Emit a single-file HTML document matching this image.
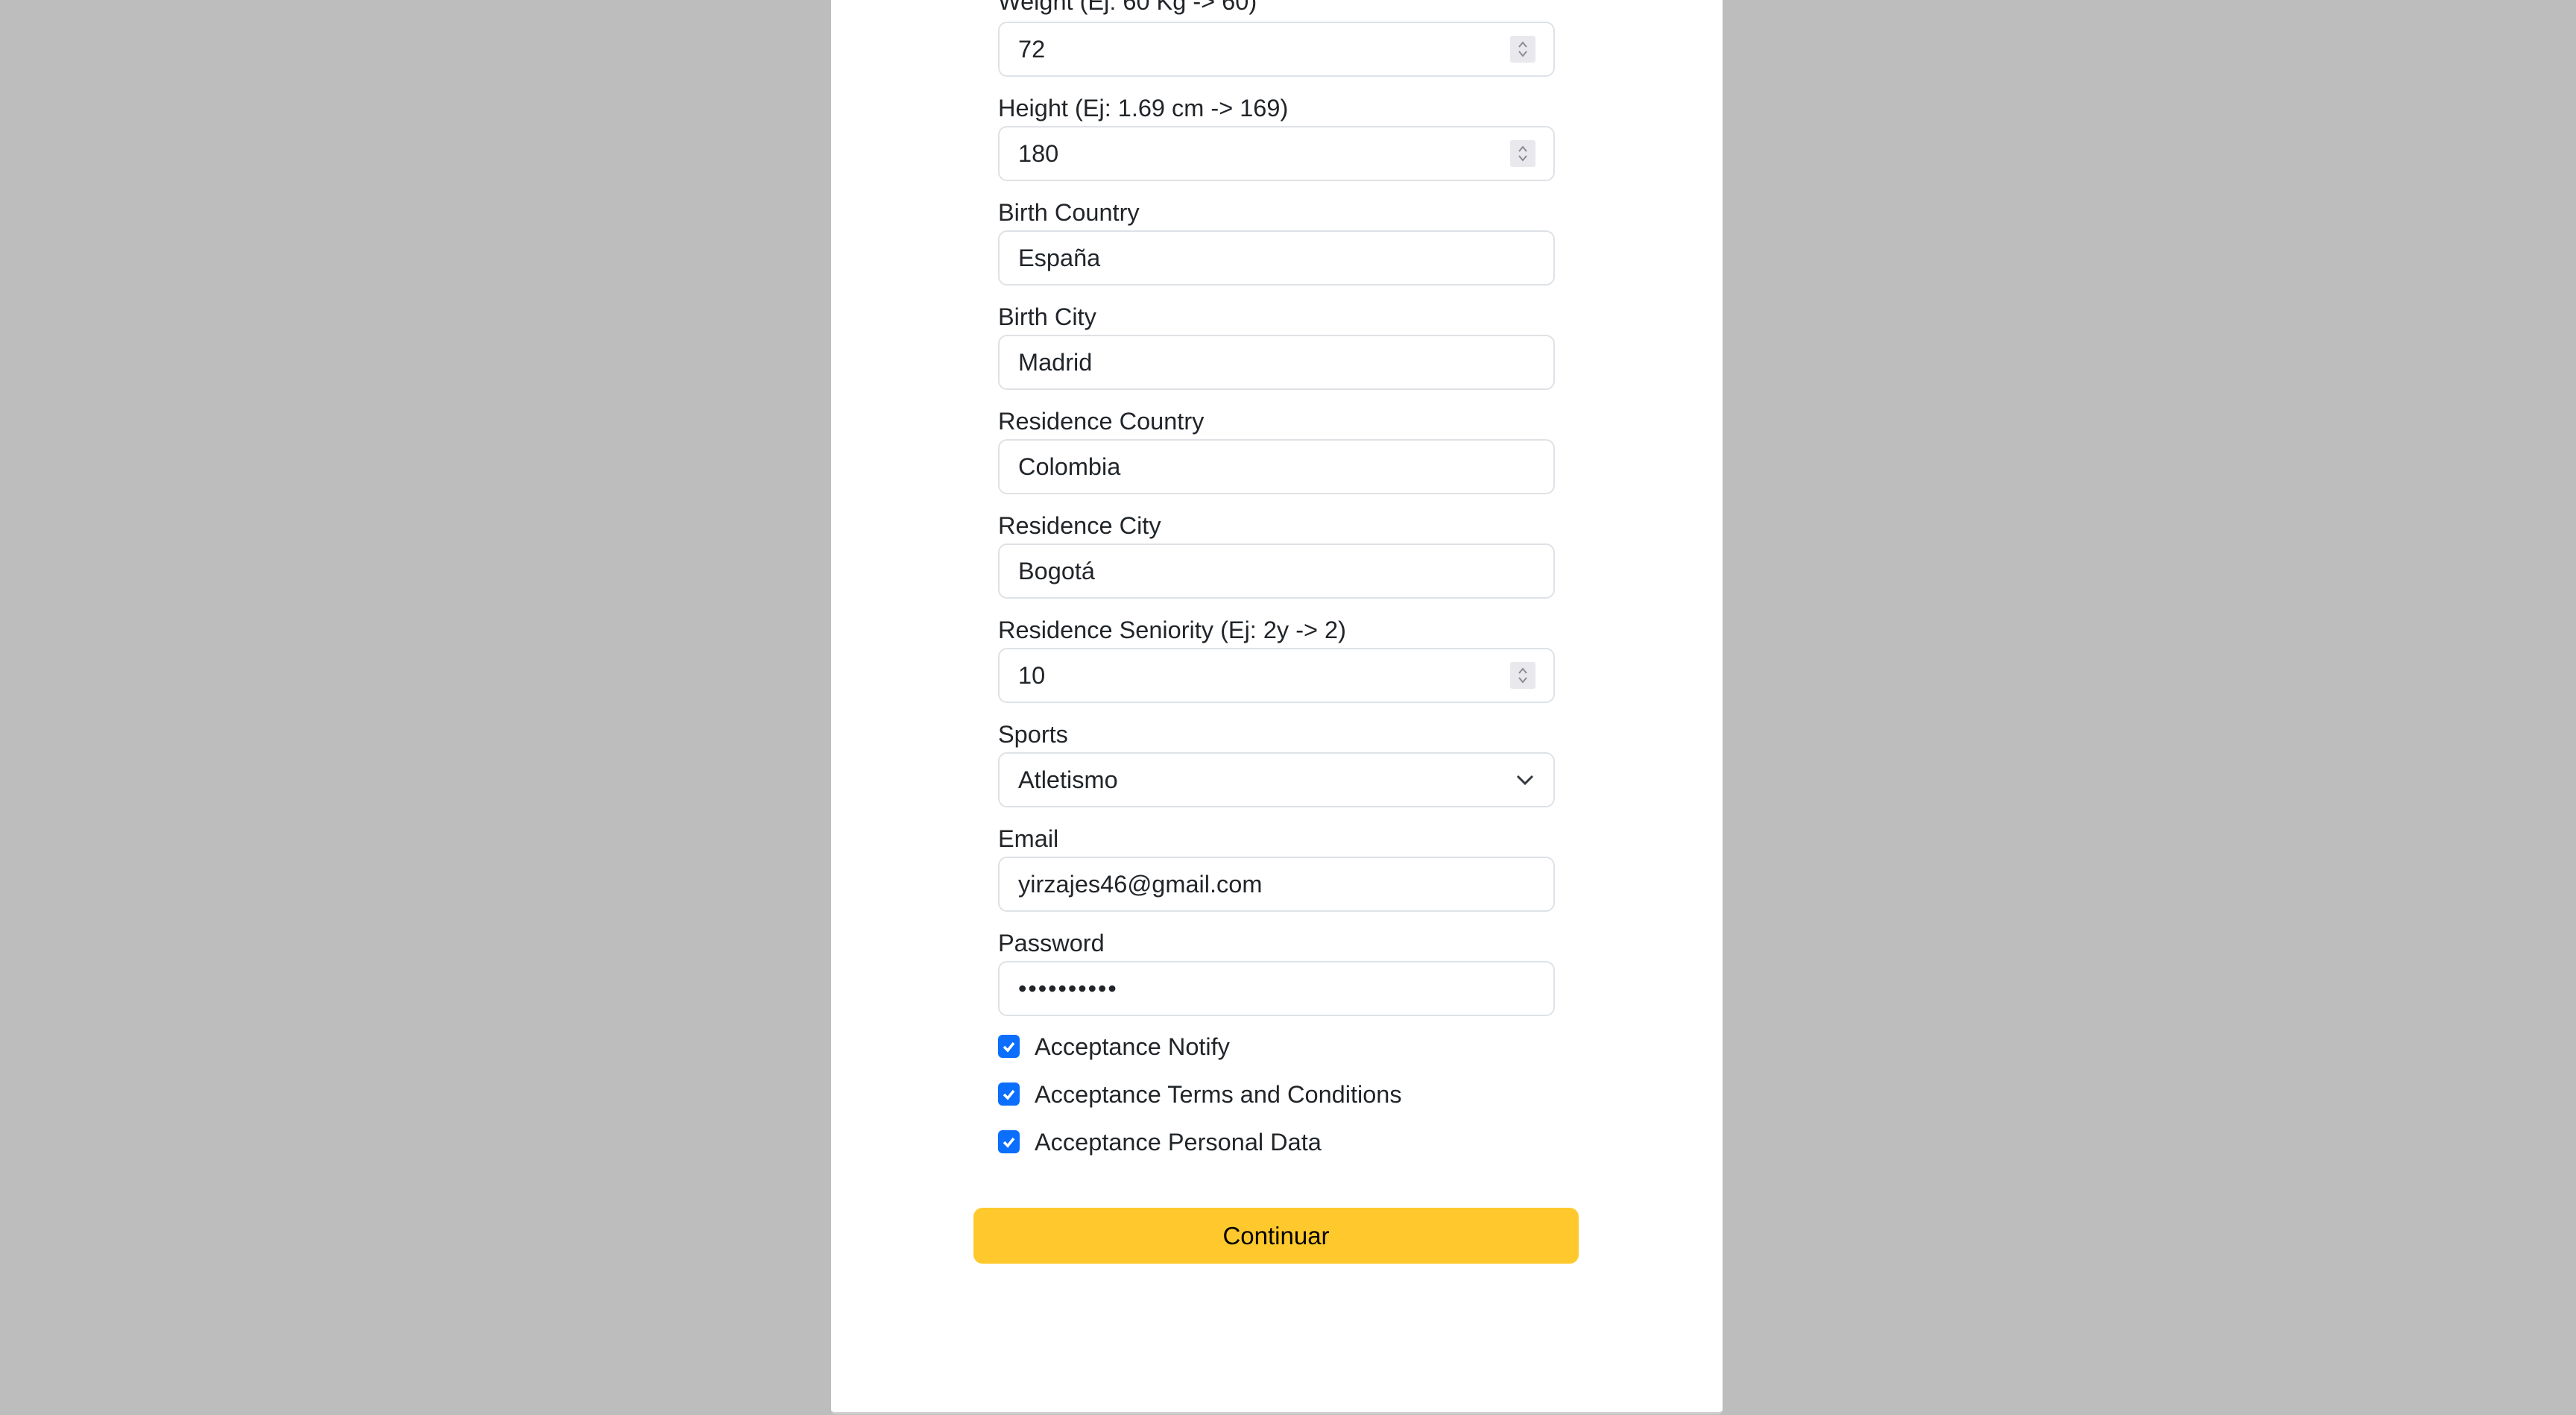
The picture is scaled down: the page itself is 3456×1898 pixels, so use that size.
<!DOCTYPE html>
<html><head><meta charset="utf-8"><style>
html,body{margin:0;padding:0;}
body{width:3456px;height:1898px;background:#bdbdbd;position:relative;overflow:hidden;font-family:"Liberation Sans",Arial,sans-serif;color:#212529;}
.card{position:absolute;left:1115px;top:-10px;width:1196px;height:1904px;background:#fff;border-bottom:3px solid #d0d0d0;border-radius:0 0 6px 6px;}
.lbl{position:absolute;left:1339px;font-size:32.5px;line-height:36px;}
.inp{position:absolute;left:1339px;width:743px;height:70px;border:2px solid #dee2e6;border-radius:12px;background:#fff;}
.inp span.v{position:absolute;left:25px;top:0;line-height:70px;font-size:32.5px;}
.spin{position:absolute;left:685px;top:17px;width:34px;height:36px;background:#e9e9ed;border-radius:3px;}
.chk{position:absolute;left:1339px;width:29px;height:31px;background:#0b6efd;border-radius:6px;}
.ct{position:absolute;left:1388px;font-size:32.5px;line-height:36px;}
.btn{position:absolute;left:1306px;top:1620px;width:812px;height:75px;background:#ffc92d;border-radius:12px;text-align:center;line-height:75px;font-size:33px;color:#000;}
</style></head><body>
<div class="card"></div>

<div class="lbl" style="top:-16px">Weight (Ej: 60 Kg -&gt; 60)</div>
<div class="inp" style="top:29px"><span class="v">72</span><div class="spin"><svg width="34" height="36" viewBox="0 0 34 36"><path d="M12 15l5-6 5 6M12 21l5 6 5-6" fill="none" stroke="#8a8a95" stroke-width="2"/></svg></div></div>

<div class="lbl" style="top:127px">Height (Ej: 1.69 cm -&gt; 169)</div>
<div class="inp" style="top:169px"><span class="v">180</span><div class="spin"><svg width="34" height="36" viewBox="0 0 34 36"><path d="M12 15l5-6 5 6M12 21l5 6 5-6" fill="none" stroke="#8a8a95" stroke-width="2"/></svg></div></div>

<div class="lbl" style="top:267px">Birth Country</div>
<div class="inp" style="top:309px"><span class="v">España</span></div>

<div class="lbl" style="top:407px">Birth City</div>
<div class="inp" style="top:449px"><span class="v">Madrid</span></div>

<div class="lbl" style="top:547px">Residence Country</div>
<div class="inp" style="top:589px"><span class="v">Colombia</span></div>

<div class="lbl" style="top:687px">Residence City</div>
<div class="inp" style="top:729px"><span class="v">Bogotá</span></div>

<div class="lbl" style="top:827px">Residence Seniority (Ej: 2y -&gt; 2)</div>
<div class="inp" style="top:869px"><span class="v">10</span><div class="spin"><svg width="34" height="36" viewBox="0 0 34 36"><path d="M12 15l5-6 5 6M12 21l5 6 5-6" fill="none" stroke="#8a8a95" stroke-width="2"/></svg></div></div>

<div class="lbl" style="top:967px">Sports</div>
<div class="inp" style="top:1009px"><span class="v">Atletismo</span><svg style="position:absolute;left:692px;top:25px" width="26" height="20" viewBox="0 0 26 20"><path d="M3 5l10 10 10-10" fill="none" stroke="#343a40" stroke-width="3"/></svg></div>

<div class="lbl" style="top:1107px">Email</div>
<div class="inp" style="top:1149px"><span class="v">yirzajes46@gmail.com</span></div>

<div class="lbl" style="top:1247px">Password</div>
<div class="inp" style="top:1289px"><span class="v" style="letter-spacing:2px">••••••••••</span></div>

<div class="chk" style="top:1388px"><svg width="29" height="31" viewBox="0 0 29 31"><path d="M8 16l5 5 8-10" fill="none" stroke="#fff" stroke-width="3.5"/></svg></div>
<div class="ct" style="top:1386px">Acceptance Notify</div>
<div class="chk" style="top:1452px"><svg width="29" height="31" viewBox="0 0 29 31"><path d="M8 16l5 5 8-10" fill="none" stroke="#fff" stroke-width="3.5"/></svg></div>
<div class="ct" style="top:1450px">Acceptance Terms and Conditions</div>
<div class="chk" style="top:1516px"><svg width="29" height="31" viewBox="0 0 29 31"><path d="M8 16l5 5 8-10" fill="none" stroke="#fff" stroke-width="3.5"/></svg></div>
<div class="ct" style="top:1514px">Acceptance Personal Data</div>

<div class="btn">Continuar</div>
</body></html>
